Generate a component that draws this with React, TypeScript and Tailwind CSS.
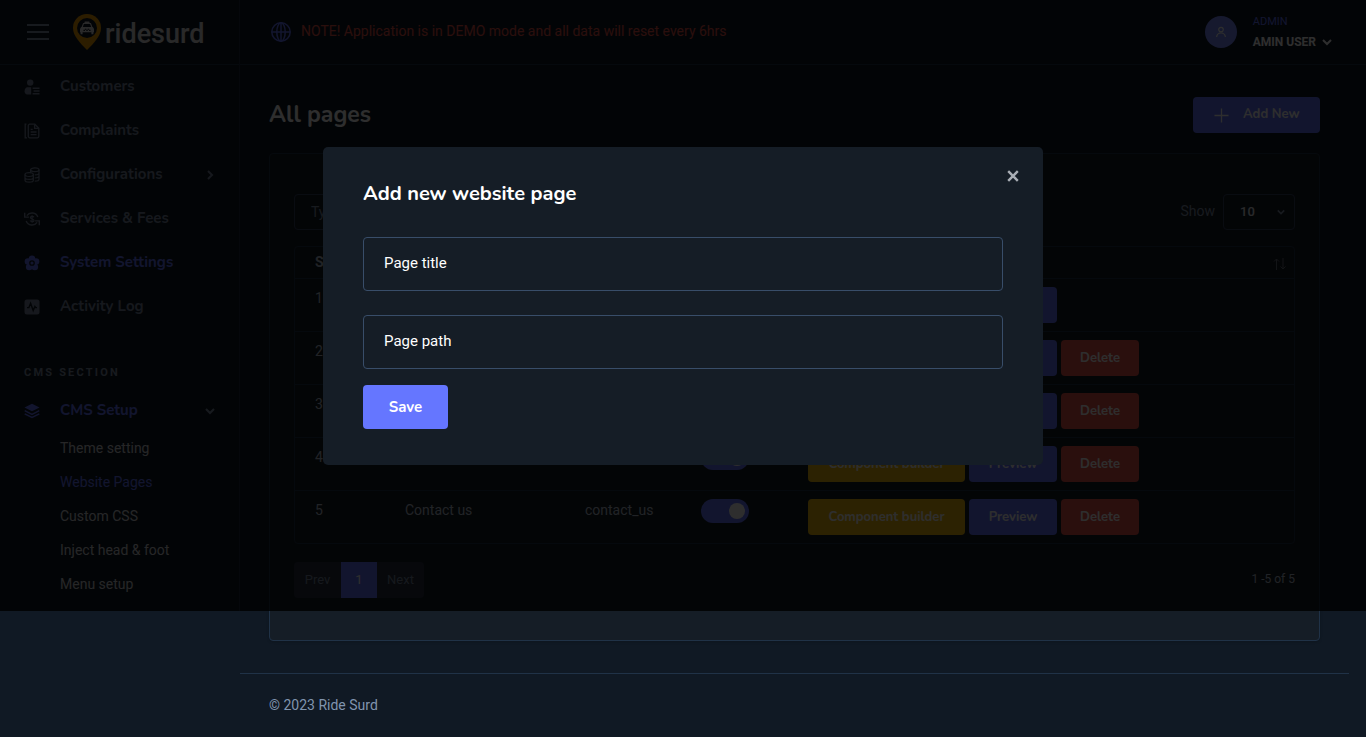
import React from "react";

type IconProps = { className?: string };

const heading = "font-['Nunito','Lato',sans-serif]";

function CustomersIcon({ className }: IconProps) {
  return (
    <svg viewBox="0 0 16 16" fill="currentColor" className={className} aria-hidden="true">
      <circle cx="6.2" cy="3.6" r="3.2" />
      <path d="M3.4 8.3h3.8v7.200H3.200C1.600 15.500.6 14 .6 12.200.6 10 1.800 8.300 3.400 8.300z" />
      <path d="M8.600 8.600h6.900v1.500H8.600zM9.600 11.300h5.900v1.500H9.600zM8.600 14h6.900v1.500H8.600z" />
    </svg>
  );
}

function ComplaintsIcon({ className }: IconProps) {
  return (
    <svg viewBox="0 0 16 16" fill="none" stroke="currentColor" strokeWidth="1.3" className={className} aria-hidden="true">
      <path d="M2.400 1.200H1.200v13.600h1.800" />
      <path d="M5.800 1.200h5l4 4v8.100a1.500 1.500 0 0 1-1.500 1.500H5.800a1.500 1.500 0 0 1-1.500-1.500V2.700a1.500 1.500 0 0 1 1.500-1.500z" />
      <path d="M10.600 1.400v4h4M6.700 6.300h2M6.700 9h5.800M6.700 11.700h5.800" />
    </svg>
  );
}

function CoinsIcon({ className }: IconProps) {
  return (
    <svg viewBox="0 0 16 16" fill="none" stroke="currentColor" strokeWidth="1.200" className={className} aria-hidden="true">
      <ellipse cx="10.800" cy="2.800" rx="4.200" ry="1.900" />
      <path d="M6.600 2.800v3M15 2.800v9.400c0 1-1.800 1.900-4.200 1.900M15 6c0 1-1.800 1.900-4.200 1.900M15 9.100c0 1-1.800 1.900-4.200 1.900" />
      <ellipse cx="5.200" cy="7.600" rx="4.200" ry="1.900" />
      <path d="M1 7.600v5.700c0 1 1.900 1.900 4.200 1.900s4.200-.9 4.200-1.900V7.600M1 10.500c0 1 1.900 1.900 4.200 1.900s4.200-.9 4.200-1.900" />
    </svg>
  );
}

function FeesIcon({ className }: IconProps) {
  return (
    <svg viewBox="0 0 16 16" fill="none" stroke="currentColor" strokeWidth="1.400" className={className} aria-hidden="true">
      <path d="M2.900 4.700A6.200 6.200 0 0 1 13.800 6M.7 1.800v4.300h4.200" />
      <path d="M13.100 11.300A6.200 6.200 0 0 1 2.200 10M15.300 14.200V9.900h-4.200" />
      <path d="M9.900 6.300c-.3-.7-1-1-1.800-1-1 0-1.700.5-1.700 1.300 0 1.900 3.600.9 3.600 2.800 0 .8-.8 1.300-1.900 1.300-.9 0-1.600-.4-1.900-1.100M8.100 4.300v7.400" strokeWidth="1.200" />
    </svg>
  );
}

function SettingsIcon({ className }: IconProps) {
  return (
    <svg viewBox="0 0 16 16" className={className} aria-hidden="true">
      <g fill="currentColor">
        <circle cx="8" cy="3.700" r="3.200" />
        <circle cx="12" cy="6.500" r="3.300" />
        <circle cx="10.800" cy="12" r="3.300" />
        <circle cx="5.200" cy="12" r="3.300" />
        <circle cx="4" cy="6.500" r="3.300" />
        <circle cx="8" cy="8" r="4.500" />
      </g>
      <circle cx="8" cy="8" r="2.200" fill="none" stroke="#101924" strokeWidth="1.300" />
    </svg>
  );
}

function ActivityIcon({ className }: IconProps) {
  return (
    <svg viewBox="0 0 16 16" className={className} aria-hidden="true">
      <rect x="0.500" y="0.500" width="15" height="15" rx="2.500" fill="currentColor" />
      <path d="M3 8.600h1.900L6.600 4.300l2.600 7.300 1.700-4.200.8 1.200H13" fill="none" stroke="#101924" strokeWidth="1.400" />
    </svg>
  );
}

function LayersIcon({ className }: IconProps) {
  return (
    <svg viewBox="0 0 16 16" className={className} aria-hidden="true">
      <path d="M8 .8l7.500 3.700L8 8.300.5 4.500z" fill="currentColor" />
      <path d="M.7 7.700L8 11.300l7.300-3.600M.7 10.900L8 14.500l7.300-3.600" fill="none" stroke="currentColor" strokeWidth="1.500" />
    </svg>
  );
}

function Chevron({ className }: IconProps) {
  return (
    <svg viewBox="0 0 10 10" fill="none" stroke="currentColor" strokeWidth="2" className={className} aria-hidden="true">
      <path d="M1 3l4 4 4-4" />
    </svg>
  );
}

function Logo() {
  return (
    <a href="#home" className="flex items-center gap-1 text-[#e0e0e0]" aria-label="ridesurd">
      <svg viewBox="0 0 28 36" className="h-9 w-7" aria-hidden="true">
        <path d="M14 0a14 14 0 0 1 14 14c0 8-7.500 15.500-14 22C7.500 29.500 0 22 0 14A14 14 0 0 1 14 0z" fill="#f4a300" />
        <circle cx="14" cy="14" r="10" fill="#101924" />
        <path d="M11.800 7.600h4.400l.5 1.400h-5.400z" fill="#e0e0e0" />
        <path d="M9 13.500l1.500-4h7l1.500 4" fill="none" stroke="#e0e0e0" strokeWidth="1.100" />
        <path d="M8.200 13h11.600l1.200 1.800v3.400H7v-3.400z" fill="#e0e0e0" />
        <path d="M7.600 18h2v2.300h-2zM18.400 18h2v2.300h-2z" fill="#e0e0e0" />
        <path d="M10.500 16.400h1.400M13.300 16.400h1.400M16.100 16.400h1.400M11.900 15.200h1.400M14.700 15.200h1.400" stroke="#101924" strokeWidth="1.100" />
      </svg>
      <span className="pt-1 font-['Roboto',sans-serif] text-[27px] leading-9 font-medium">ridesurd</span>
    </a>
  );
}

const menu = [
  { label: "Customers", Icon: CustomersIcon },
  { label: "Complaints", Icon: ComplaintsIcon },
  { label: "Configurations", Icon: CoinsIcon, arrow: true },
  { label: "Services & Fees", Icon: FeesIcon },
  { label: "System Settings", Icon: SettingsIcon, active: true },
  { label: "Activity Log", Icon: ActivityIcon },
];

const submenu = [
  { label: "Theme setting" },
  { label: "Website Pages", active: true },
  { label: "Custom CSS" },
  { label: "Inject head & foot" },
  { label: "Menu setup" },
];

const pages = [
  { id: 1, title: "Home", path: "home", fixed: true },
  { id: 2, title: "About us", path: "about_us" },
  { id: 3, title: "Services", path: "services" },
  { id: 4, title: "Drivers", path: "drivers" },
  { id: 5, title: "Contact us", path: "contact_us" },
];

function Sidebar() {
  return (
    <aside className="h-[611px] w-60 shrink-0 overflow-hidden border-r border-[#1d2a3d]">
      <div className="flex h-[65px] items-center gap-6 border-b border-[#203247] pl-[27px]">
        <button type="button" aria-label="Toggle menu" className="flex w-[22px] flex-col gap-[5px] text-[#8091a7]">
          <span className="h-0.5 w-full bg-current" />
          <span className="h-0.5 w-full bg-current" />
          <span className="h-0.5 w-full bg-current" />
        </button>
        <Logo />
      </div>
      <nav>
        <ul>
          {menu.map(({ label, Icon, arrow, active }) => (
            <li key={label}>
              <a
                href="#menu"
                className={`flex h-11 items-center pr-6 pl-6 text-[15px] font-bold ${heading} ${active ? "text-[#6576ff]" : "text-[#7888a0]"}`}
              >
                <Icon className="mr-5 h-4 w-4" />
                <span className="flex-1 pb-0.5">{label}</span>
                {arrow && <Chevron className="h-[10px] w-[10px] -rotate-90" />}
              </a>
            </li>
          ))}
        </ul>
        <h2 className="mt-7 flex h-8 items-center font-['Roboto',sans-serif] pl-6 text-[11px] font-bold tracking-[2.2px] text-[#8091a7]">
          CMS SECTION
        </h2>
        <a href="#cms" className={`flex h-11 items-center px-6 text-[15px] font-bold text-[#6576ff] ${heading}`}>
          <LayersIcon className="mr-5 h-4 w-4" />
          <span className="flex-1 pb-0.5">CMS Setup</span>
          <Chevron className="h-[10px] w-[10px] text-[#8091a7]" />
        </a>
        <ul className="-mt-0.5 pl-[60px]">
          {submenu.map(({ label, active }) => (
            <li key={label}>
              <a href="#sub" className={`flex h-[34px] items-center text-sm ${active ? "text-[#6576ff]" : "text-[#d0d3d8]"}`}>
                {label}
              </a>
            </li>
          ))}
        </ul>
      </nav>
    </aside>
  );
}

function Header() {
  return (
    <header className="flex h-[65px] items-center justify-between border-b border-[#203247] pr-[34px] pl-[31px]">
      <p className="flex items-center gap-2.5 text-sm text-[#e85347]">
        <svg viewBox="0 0 20 20" fill="none" stroke="#6576ff" strokeWidth="1.500" className="h-5 w-5" aria-hidden="true">
          <circle cx="10" cy="10" r="9.200" />
          <ellipse cx="10" cy="10" rx="4.200" ry="9.200" />
          <path d="M.8 10h18.400M10 .8v18.400" />
        </svg>
        <span className="pb-0.5">NOTE! Application is in DEMO mode and all data will reset every 6hrs</span>
      </p>
      <button type="button" className="flex items-center gap-4 text-left">
        <span className="flex h-8 w-8 items-center justify-center rounded-full bg-[#798bff] text-white">
          <svg viewBox="0 0 12 12" fill="none" stroke="currentColor" strokeWidth="1.200" className="h-3 w-3" aria-hidden="true">
            <circle cx="6" cy="3.600" r="2.300" />
            <path d="M1.600 11c.3-2.400 2-4 4.400-4s4.100 1.600 4.400 4" />
          </svg>
        </span>
        <span>
          <span className="block text-[11px] leading-5 text-[#6576ff]">ADMIN</span>
          <span className="flex items-center gap-1.5 text-xs leading-5 font-bold text-white">
            AMIN USER
            <Chevron className="h-[10px] w-[10px]" />
          </span>
        </span>
      </button>
    </header>
  );
}

const actionButton = `h-9 rounded pt-0.5 text-[13px] font-bold text-white ${heading}`;

function PagesTable() {
  return (
    <div className="rounded border border-[#203247]">
      <table className="w-full table-fixed border-collapse text-left text-sm text-[#b7c2d0]">
        <colgroup>
          <col className="w-[90px]" />
          <col className="w-[180px]" />
          <col className="w-[136px]" />
          <col className="w-[87px]" />
          <col />
        </colgroup>
        <thead>
          <tr className="h-[31px]">
            <th className="pl-5">SN</th>
            <th className="pl-5">Title</th>
            <th className="pl-5">Path</th>
            <th>Status</th>
            <th className="pl-5">
              <span className="flex items-center justify-between pr-2">
                Action
                <svg viewBox="0 0 13 12" fill="none" stroke="currentColor" className="mt-1 h-3 w-[13px] opacity-50" aria-hidden="true">
                  <path d="M3.500 12V1M1 3.500L3.500 1 6 3.500M10 0v11M7.500 8.500L10 11l2.500-2.500" />
                </svg>
              </span>
            </th>
          </tr>
        </thead>
        <tbody>
          {pages.map((page) => (
            <tr key={page.id} className="h-[53px] border-t border-[#203247] align-top">
              <td className="pt-[9px] pl-5">{page.id}</td>
              <td className="pt-[9px] pl-5">{page.title}</td>
              <td className="pt-[9px] pl-5">{page.path}</td>
              <td className="pt-2">
                <label className="relative block h-6 w-12">
                  <input
                    type="checkbox"
                    defaultChecked
                    aria-label={`${page.title} enabled`}
                    className="peer block h-6 w-12 appearance-none rounded-full bg-[#334460] checked:bg-[#6576ff]"
                  />
                  <span className="absolute top-1 left-1 h-4 w-4 rounded-full bg-white peer-checked:left-7" />
                </label>
              </td>
              <td className="pt-2 pl-5">
                <div className="flex gap-1">
                  <button type="button" className={`w-[157px] bg-[#f4bd0e] ${actionButton}`}>Component builder</button>
                  <button type="button" className={`w-[88px] bg-[#6576ff] ${actionButton}`}>Preview</button>
                  {!page.fixed && <button type="button" className={`w-[78px] bg-[#e85347] ${actionButton}`}>Delete</button>}
                </div>
              </td>
            </tr>
          ))}
        </tbody>
      </table>
    </div>
  );
}

function PagesCard() {
  return (
    <section className="mt-5 rounded border border-[#203247] bg-[#151d26] px-6 pt-10 pb-[42px] shadow">
      <div className="mb-4 flex items-center justify-between">
        <input
          type="search"
          aria-label="Search pages"
          placeholder="Type in to Search"
          className="h-9 w-[200px] rounded border border-[#334460] px-4 text-sm placeholder:text-[#8091a7]"
        />
        <label className="flex items-center gap-2 text-sm text-[#8091a7]">
          <span className="pb-0.5">Show</span>
          <span className="relative">
            <select defaultValue="10" className="h-9 w-[72px] appearance-none rounded border border-[#334460] pl-4 text-[13px] font-medium text-[#e0e4ea]">
              <option>10</option>
              <option>25</option>
              <option>50</option>
            </select>
            <Chevron className="pointer-events-none absolute top-3.5 right-2.5 h-2 w-2" />
          </span>
        </label>
      </div>
      <PagesTable />
      <div className="mt-[18px] flex items-center justify-between text-[13px]">
        <nav className="flex h-9 overflow-hidden rounded bg-[#28303e] text-[#7888a0]" aria-label="Pagination">
          <button type="button" className="w-[47px]">Prev</button>
          <button type="button" className="w-9 bg-[#6576ff] text-white">1</button>
          <button type="button" className="w-[47px]">Next</button>
        </nav>
        <p className="pb-0.5 text-xs text-[#b7c2d0]">1 -5 of 5</p>
      </div>
    </section>
  );
}

function AddPageModal() {
  const field =
    "block h-[54px] w-full rounded border border-[#384d69] bg-transparent px-5 pb-0.5 text-[15px] text-white outline-none placeholder:text-white placeholder:opacity-100";
  return (
    <div className="absolute inset-x-0 top-0 flex h-[611px] items-center justify-center bg-black/82">
      <form role="dialog" aria-labelledby="add-page-title" className="relative h-[318px] w-[720px] max-w-full rounded-[5px] bg-[#151d26] px-10 pt-8">
        <button type="button" aria-label="Close" className="absolute top-[23px] right-6 text-[#a9aeb5]">
          <svg viewBox="0 0 12 12" fill="none" stroke="currentColor" strokeWidth="2.400" className="h-3 w-3" aria-hidden="true">
            <path d="M1.200 1.200l9.600 9.600M10.800 1.200l-9.600 9.600" />
          </svg>
        </button>
        <h2 id="add-page-title" className={`text-xl leading-[30px] font-bold text-white ${heading}`}>
          Add new website page
        </h2>
        <div className="mt-7 flex flex-col gap-6">
          <input type="text" aria-label="Page title" placeholder="Page title" className={field} />
          <input type="text" aria-label="Page path" placeholder="Page path" className={field} />
        </div>
        <button type="submit" className={`mt-4 h-11 w-[85px] rounded bg-[#6576ff] pt-0.5 text-[15px] font-bold text-white ${heading}`}>
          Save
        </button>
      </form>
    </div>
  );
}

export default function App() {
  return (
    <div className="relative min-h-screen bg-[#101924] font-['Roboto',sans-serif] text-white">
      <div className="flex">
        <Sidebar />
        <div className="min-w-0 flex-1">
          <Header />
          <main className="mr-[17px] px-[29px] pt-8 pb-8">
            <div className="flex items-center justify-between">
              <h1 className={`text-[23px] leading-9 font-bold ${heading}`}>All pages</h1>
              <button type="button" className={`flex h-9 w-[127px] items-center gap-3.5 rounded bg-[#6576ff] pl-[21px] text-[13px] font-bold ${heading}`}>
                <svg viewBox="0 0 15 15" stroke="currentColor" strokeWidth="1.300" className="h-[15px] w-[15px]" aria-hidden="true">
                  <path d="M7.500 0.500v14M0.500 7.500h14" />
                </svg>
                Add New
              </button>
            </div>
            <PagesCard />
          </main>
          <footer className="mr-[17px] border-t border-[#203247] px-[29px] py-[21px] text-sm text-[#8094ae]">
            © 2023 Ride Surd
          </footer>
        </div>
      </div>
      <AddPageModal />
    </div>
  );
}
